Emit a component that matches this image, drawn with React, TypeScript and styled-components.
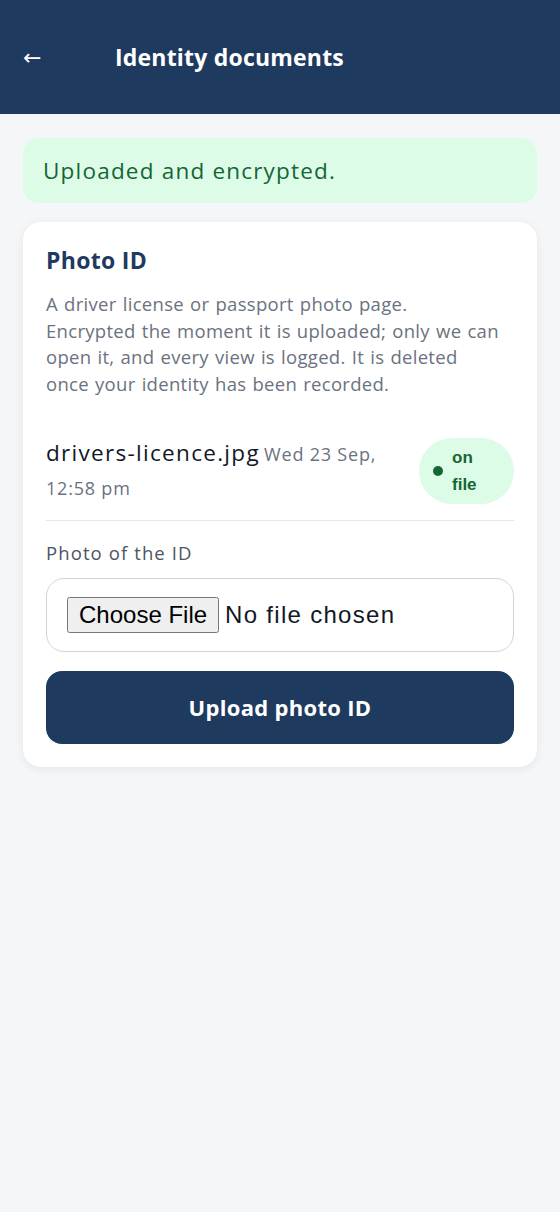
import * as React from "react";
import styled, { createGlobalStyle } from "styled-components";

const GlobalStyle = createGlobalStyle`
  html, body {
    margin: 0;
    padding: 0;
    background: #f5f6f8;
  }
  body {
    font-family: "Open Sans", "Noto Sans", sans-serif;
    color: #111827;
  }
`;

const Page = styled.div`
  min-height: 1212px;
  background: #f5f6f8;
`;

const Header = styled.header`
  height: 114px;
  background: #1f3a5f;
  display: flex;
  align-items: center;
  padding: 0 0 0 23px;
  box-sizing: border-box;
`;

const BackButton = styled.button`
  background: none;
  border: none;
  color: #ffffff;
  font-family: "DejaVu Sans", sans-serif;
  font-size: 22px;
  width: 56px;
  padding: 0;
  text-align: left;
  cursor: pointer;
`;

const Title = styled.h1`
  margin: 0 0 0 36px;
  color: #ffffff;
  font-size: 23px;
  font-weight: 700;
  letter-spacing: 0.2px;
`;

const Main = styled.main`
  padding: 24px 23px;
  display: flex;
  flex-direction: column;
  gap: 19px;
`;

const Alert = styled.div`
  background: #dcfce7;
  color: #166534;
  border-radius: 16px;
  padding: 0 20px;
  height: 65px;
  display: flex;
  align-items: center;
  font-size: 22.5px;
  letter-spacing: 1.2px;
`;

const Card = styled.section`
  background: #ffffff;
  border-radius: 18px;
  padding: 23px;
  box-shadow: 0 2px 10px rgba(15, 23, 42, 0.07);
`;

const CardTitle = styled.h2`
  margin: 0;
  color: #1f3a5f;
  font-size: 23px;
  font-weight: 700;
  line-height: 30px;
  letter-spacing: 0.3px;
`;

const Description = styled.p`
  margin: 16px 0 0;
  color: #6b7280;
  font-size: 18.5px;
  line-height: 26.7px;
  letter-spacing: 0.3px;
  word-spacing: 1px;
`;

const FileRow = styled.div`
  display: flex;
  align-items: center;
  gap: 14px;
  margin-top: 38px;
  padding-bottom: 14px;
  border-bottom: 1px solid #e5e7eb;
`;

const FileText = styled.div`
  flex: 1;
  line-height: 33px;
`;

const FileName = styled.span`
  font-size: 22.5px;
  letter-spacing: 1.3px;
  color: #111827;
`;

const FileDate = styled.span`
  font-size: 18px;
  letter-spacing: 0.8px;
  color: #6b7280;
`;

const Badge = styled.div`
  display: flex;
  align-items: center;
  gap: 9px;
  background: #dcfce7;
  color: #166534;
  border-radius: 33px;
  padding: 6px 14px;
  flex-shrink: 0;
`;

const Dot = styled.span`
  width: 10px;
  height: 10px;
  border-radius: 50%;
  background: #166534;
  flex-shrink: 0;
`;

const BadgeLabel = styled.span`
  width: 48px;
  font-family: "Liberation Sans", Arial, sans-serif;
  font-weight: 700;
  font-size: 17px;
  line-height: 27px;
`;

const FieldLabel = styled.label`
  display: block;
  margin-top: 19px;
  color: #4b5563;
  font-size: 18.5px;
  letter-spacing: 1.1px;
  line-height: 26px;
`;

const FileInput = styled.input`
  display: block;
  box-sizing: border-box;
  width: 100%;
  margin-top: 12px;
  padding: 18px 20px;
  border: 1.5px solid #d1d5db;
  border-radius: 18px;
  background: #ffffff;
  font-family: "Liberation Sans", Arial, sans-serif;
  font-size: 24px;
  letter-spacing: 1.3px;
  color: #111827;

  &::file-selector-button {
    font-family: "Liberation Sans", Arial, sans-serif;
    font-size: 24px;
    letter-spacing: 0;
    padding: 2px 10px;
    margin-right: 6px;
    color: #000000;
  }
`;

const SubmitButton = styled.button`
  display: block;
  width: 100%;
  height: 73px;
  margin-top: 19px;
  border: none;
  border-radius: 16px;
  background: #1f3a5f;
  color: #ffffff;
  font-family: "Open Sans", sans-serif;
  font-size: 22px;
  font-weight: 700;
  letter-spacing: 0.3px;
  cursor: pointer;
`;

export default function App() {
  return (
    <Page>
      <GlobalStyle />
      <Header>
        <BackButton aria-label="Back">←</BackButton>
        <Title>Identity documents</Title>
      </Header>
      <Main>
        <Alert>Uploaded and encrypted.</Alert>
        <Card>
          <CardTitle>Photo ID</CardTitle>
          <Description>
            A driver license or passport photo page.
            <br />
            Encrypted the moment it is uploaded; only we can
            <br />
            open it, and every view is logged. It is deleted
            <br />
            once your identity has been recorded.
          </Description>
          <FileRow>
            <FileText>
              <FileName>drivers-licence.jpg</FileName>{" "}
              <FileDate>Wed 23 Sep,</FileDate> <FileDate>12:58 pm</FileDate>
            </FileText>
            <Badge>
              <Dot />
              <BadgeLabel>on file</BadgeLabel>
            </Badge>
          </FileRow>
          <FieldLabel htmlFor="photo-id">Photo of the ID</FieldLabel>
          <FileInput id="photo-id" type="file" accept="image/*" />
          <SubmitButton type="button">Upload photo ID</SubmitButton>
        </Card>
      </Main>
    </Page>
  );
}
